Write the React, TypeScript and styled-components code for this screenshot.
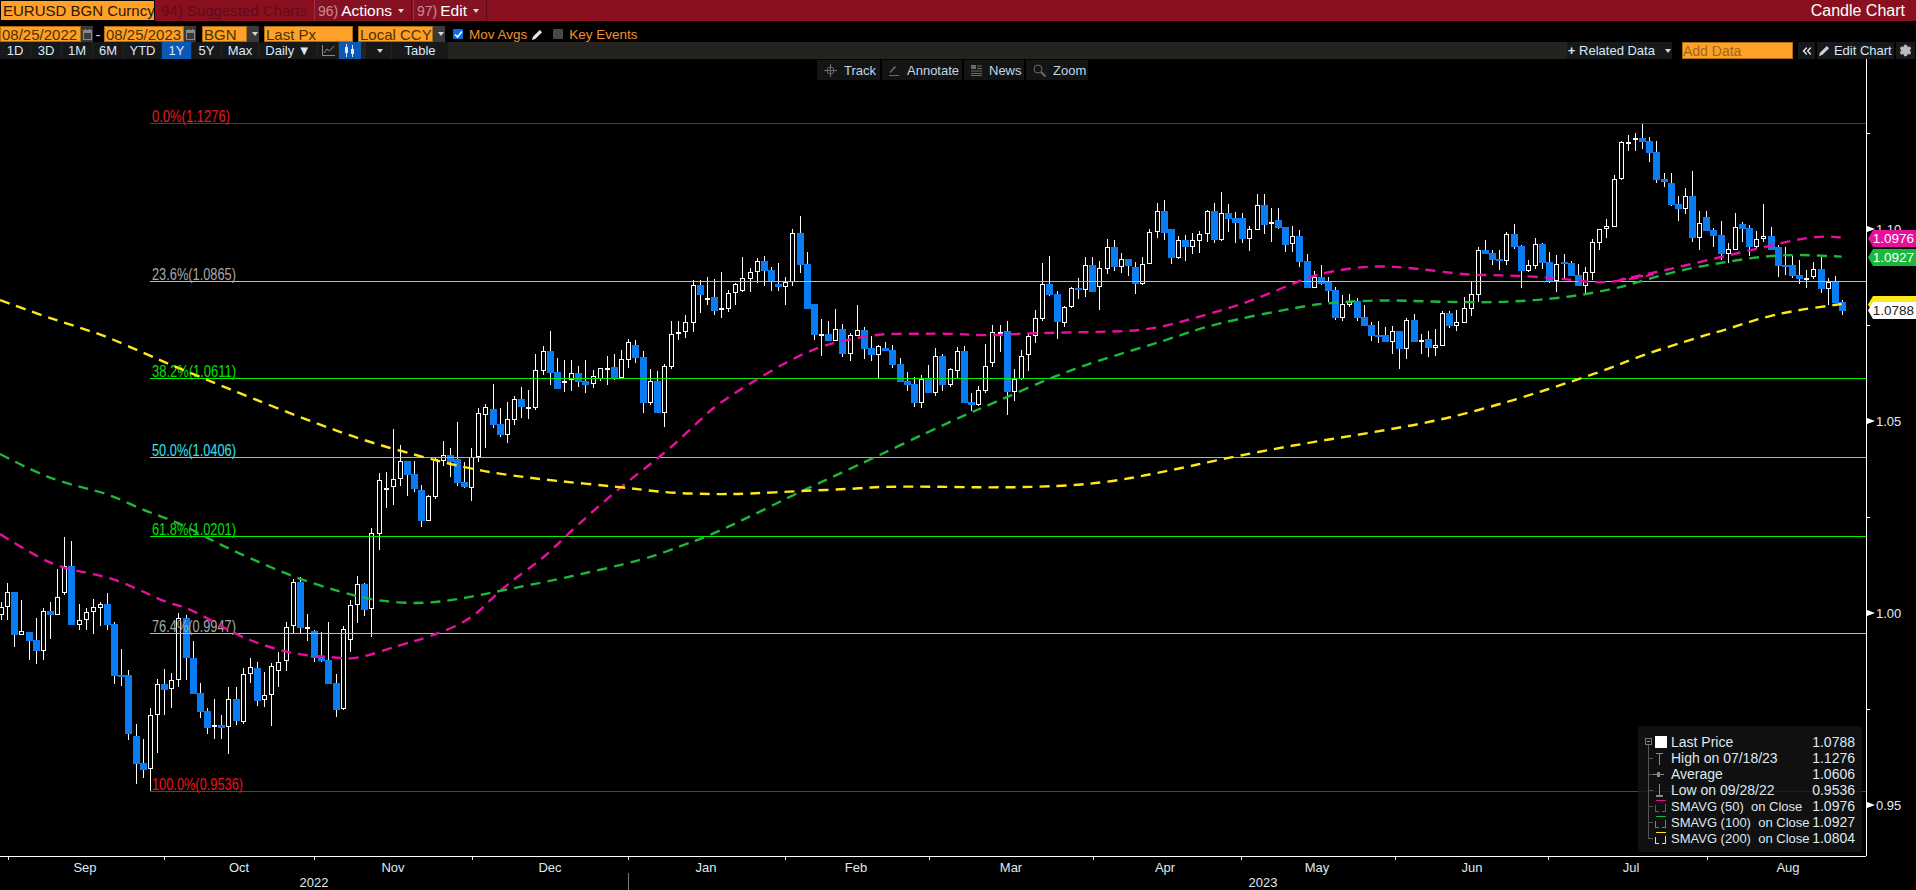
import styled, { createGlobalStyle } from 'styled-components';
import { ChevronsLeft, Settings } from 'lucide-react';

type Row = number[];
type Candle = { x: number; up: boolean; wt: number; bt: number; bb: number; wb: number };

// candles were read off in crops of the chart, so each block keeps its crop origin
const fromCrop = (ox: number, oy: number, rows: Row[]): Candle[] =>
	rows.map(([zx, up, wt, bt, bb, wb]) => ({
		x: Math.round(ox + zx / 3),
		up: up === 1,
		wt: Math.round(oy + wt / 3),
		bt: Math.round(oy + bt / 3),
		bb: Math.round(oy + bb / 3),
		wb: Math.round(oy + wb / 3),
	}));

const candles: Candle[] = [
	...fromCrop(0, 520, [
		[2, 1, 245, 262, 284, 300], [22, 1, 190, 216, 262, 300], [43, 0, 216, 216, 344, 380], [64, 1, 240, 334, 344, 344],
		[88, 0, 336, 336, 362, 420], [109, 0, 295, 360, 392, 433], [130, 1, 265, 274, 392, 420], [151, 0, 247, 273, 285, 357],
		[172, 1, 147, 232, 284, 285], [193, 1, 52, 139, 218, 225], [214, 0, 63, 138, 314, 315], [238, 1, 252, 301, 314, 330],
		[259, 1, 265, 277, 301, 330], [280, 1, 238, 262, 277, 342], [301, 1, 246, 253, 265, 318], [322, 0, 220, 252, 314, 330],
		[343, 0, 307, 312, 467, 491], [364, 0, 387, 465, 470, 497], [385, 0, 450, 465, 641, 660], [409, 0, 612, 648, 731, 791],
		[430, 0, 657, 729, 749, 773], [451, 1, 565, 586, 748, 812], [472, 1, 478, 493, 586, 698], [493, 0, 447, 492, 509, 584],
		[514, 1, 460, 481, 506, 563], [535, 1, 280, 295, 481, 500], [559, 0, 285, 294, 413, 480], [580, 0, 363, 414, 521, 522],
		[601, 0, 490, 520, 575, 595], [622, 0, 565, 573, 623, 643], [643, 1, 537, 616, 622, 656], [664, 0, 585, 616, 623, 658],
		[685, 1, 502, 538, 622, 701], [709, 0, 500, 537, 602, 614], [730, 1, 445, 463, 605, 611], [751, 1, 415, 442, 463, 490],
		[772, 0, 425, 444, 543, 558], [793, 1, 457, 526, 541, 561], [814, 1, 430, 439, 526, 617], [835, 1, 396, 425, 454, 500],
		[859, 1, 305, 320, 424, 452], [880, 1, 178, 187, 319, 340], [901, 0, 172, 186, 323, 340], [922, 1, 283, 320, 320, 362],
		[943, 0, 330, 334, 415, 425], [964, 0, 337, 408, 422, 425], [985, 0, 306, 420, 491, 491], [1009, 0, 462, 490, 569, 590],
		[1030, 1, 318, 328, 568, 571], [1051, 1, 240, 256, 361, 395], [1072, 1, 168, 193, 256, 310], [1093, 0, 190, 192, 269, 288],
		[1114, 1, 25, 40, 268, 350],
	]),
	...fromCrop(350, 260, [
		[86, 1, 640, 661, 821, 870], [109, 1, 636, 684, 684, 743], [130, 1, 507, 658, 682, 735], [151, 1, 556, 604, 658, 678],
		[172, 0, 603, 603, 645, 708], [193, 0, 603, 642, 687, 695], [214, 0, 675, 690, 783, 800], [235, 1, 705, 708, 782, 782],
		[256, 1, 595, 598, 710, 716], [280, 1, 543, 586, 602, 618], [301, 0, 564, 586, 606, 650], [322, 0, 487, 598, 669, 678],
		[343, 0, 606, 666, 681, 683], [364, 1, 564, 592, 683, 722], [385, 1, 445, 460, 592, 606], [406, 1, 432, 442, 464, 564],
		[430, 0, 372, 447, 495, 505], [451, 0, 444, 492, 525, 530], [472, 1, 426, 478, 524, 548], [493, 1, 408, 418, 479, 495],
		[514, 0, 381, 417, 441, 474], [535, 1, 390, 442, 442, 477], [556, 1, 282, 331, 443, 450], [580, 1, 258, 274, 332, 345],
		[601, 0, 213, 273, 339, 375], [622, 0, 294, 336, 387, 388], [643, 1, 300, 363, 363, 396], [664, 1, 300, 340, 361, 393],
		[685, 0, 318, 339, 366, 380], [706, 0, 300, 363, 375, 399], [730, 1, 330, 349, 373, 385], [751, 1, 325, 325, 356, 362],
		[772, 1, 288, 324, 324, 375], [793, 0, 282, 321, 355, 360], [814, 1, 270, 298, 355, 355], [835, 1, 238, 247, 299, 324],
		[856, 0, 240, 255, 294, 308], [880, 0, 273, 291, 429, 459], [901, 1, 328, 364, 428, 435], [922, 0, 333, 363, 459, 459],
		[943, 1, 313, 319, 458, 500], [964, 1, 183, 221, 320, 326], [985, 1, 183, 215, 220, 240], [1006, 1, 166, 187, 215, 233],
		[1030, 1, 60, 76, 188, 216], [1051, 0, 60, 75, 105, 158], [1072, 1, 52, 114, 114, 135], [1093, 0, 58, 111, 153, 165],
		[1114, 1, 36, 145, 151, 173], [1135, 1, 90, 100, 146, 156], [1156, 1, 68, 73, 100, 135], [1177, 1, -10, 55, 92, 95],
		[1201, 1, 25, 37, 56, 95], [1222, 1, -6, 4, 37, 70], [1243, 0, -12, 3, 33, 78], [1264, 0, 22, 30, 63, 92],
		[1285, 0, 8, 72, 81, 92], [1306, 1, 52, 67, 80, 135], [1327, 1, -92, -80, 67, 78],
	]),
	...fromCrop(800, 170, [
		[1, 0, 138, 188, 285, 310], [22, 0, 247, 282, 417, 418], [43, 0, 402, 402, 495, 510], [64, 1, 447, 493, 493, 558],
		[85, 0, 453, 492, 513, 514], [106, 1, 418, 478, 513, 513], [127, 0, 463, 478, 552, 561], [151, 1, 490, 496, 551, 573],
		[172, 1, 406, 481, 498, 498], [193, 0, 472, 480, 537, 567], [214, 0, 498, 534, 555, 573], [235, 1, 525, 529, 554, 625],
		[256, 0, 517, 534, 543, 543], [277, 0, 525, 540, 585, 595], [301, 0, 565, 582, 636, 636], [322, 0, 606, 633, 645, 663],
		[343, 0, 621, 642, 699, 711], [364, 1, 616, 628, 698, 714], [385, 0, 585, 628, 669, 669], [406, 1, 535, 559, 668, 678],
		[427, 0, 552, 558, 645, 663], [451, 1, 595, 598, 644, 651], [472, 1, 530, 544, 602, 628], [493, 0, 528, 543, 699, 699],
		[514, 0, 669, 696, 705, 723], [535, 1, 648, 661, 705, 708], [556, 1, 522, 589, 662, 668], [577, 1, 465, 487, 578, 591],
		[601, 1, 465, 486, 486, 546], [622, 0, 453, 483, 666, 735], [643, 1, 597, 628, 665, 692], [664, 1, 541, 559, 628, 630],
		[685, 1, 490, 499, 554, 603], [706, 1, 420, 445, 499, 519], [727, 1, 279, 343, 446, 453], [748, 0, 258, 342, 375, 378],
		[772, 0, 363, 372, 456, 507], [793, 1, 408, 412, 460, 471], [814, 1, 351, 355, 412, 414], [835, 0, 324, 354, 360, 387],
		[856, 1, 262, 286, 359, 381], [877, 0, 262, 285, 366, 366], [898, 1, 273, 295, 352, 420], [922, 1, 207, 232, 296, 312],
		[943, 0, 210, 231, 291, 303], [964, 1, 250, 268, 290, 309], [985, 0, 267, 267, 288, 318], [1006, 0, 276, 291, 342, 372],
		[1027, 1, 261, 281, 341, 345], [1048, 1, 178, 187, 281, 282], [1072, 1, 99, 124, 187, 204], [1093, 0, 90, 123, 189, 210],
		[1114, 0, 177, 177, 264, 282], [1135, 1, 198, 211, 263, 266], [1156, 0, 195, 210, 231, 273], [1177, 1, 189, 211, 231, 252],
		[1198, 1, 183, 193, 212, 249], [1222, 1, 120, 124, 191, 216], [1243, 0, 99, 123, 210, 219], [1264, 1, 66, 130, 210, 213],
		[1285, 0, 102, 129, 147, 186], [1306, 0, 126, 144, 159, 219], [1327, 0, 129, 144, 207, 219], [1348, 1, 168, 178, 207, 243],
		[1372, 1, 72, 106, 179, 180], [1393, 0, 72, 105, 165, 192], [1414, 1, 114, 157, 163, 216], [1435, 0, 114, 150, 174, 177],
		[1456, 0, 171, 171, 225, 246], [1477, 1, 168, 199, 223, 246], [1498, 0, 180, 198, 276, 291],
	]),
	...fromCrop(1300, 110, [
		[22, 0, 432, 453, 534, 534], [43, 1, 483, 502, 534, 534], [64, 0, 465, 501, 522, 525], [85, 0, 501, 516, 543, 576],
		[106, 0, 531, 540, 624, 630], [127, 1, 555, 583, 624, 633], [148, 1, 552, 576, 584, 591], [172, 0, 564, 573, 624, 633],
		[193, 0, 585, 621, 648, 648], [214, 0, 636, 645, 678, 693], [235, 0, 633, 675, 678, 699], [256, 0, 651, 675, 696, 696],
		[277, 1, 648, 664, 695, 732], [298, 0, 663, 663, 717, 777], [319, 1, 625, 631, 716, 747], [343, 0, 612, 630, 696, 696],
		[364, 1, 672, 690, 690, 732], [385, 0, 663, 687, 714, 741], [406, 1, 657, 706, 713, 738], [427, 1, 603, 610, 707, 708],
		[448, 0, 603, 609, 648, 654], [469, 1, 600, 637, 647, 663], [493, 1, 561, 595, 638, 618], [514, 1, 516, 553, 596, 618],
		[535, 1, 411, 421, 554, 577], [556, 0, 390, 420, 432, 432], [577, 0, 420, 429, 450, 465], [598, 0, 420, 447, 453, 480],
		[619, 1, 366, 373, 452, 465], [643, 0, 342, 372, 411, 417], [664, 0, 405, 408, 483, 534], [685, 1, 450, 466, 483, 486],
		[706, 1, 384, 403, 467, 477], [727, 0, 399, 402, 459, 477], [748, 0, 426, 456, 513, 519], [769, 1, 435, 463, 513, 546],
		[793, 0, 432, 456, 462, 504], [814, 0, 453, 459, 498, 498], [835, 0, 462, 495, 528, 528], [856, 1, 471, 487, 527, 549],
		[877, 1, 388, 397, 488, 510], [898, 1, 358, 358, 398, 420], [919, 1, 327, 349, 358, 384], [943, 1, 195, 208, 350, 352],
		[964, 1, 93, 97, 208, 210], [985, 1, 75, 96, 96, 123], [1006, 1, 69, 85, 91, 123], [1027, 0, 42, 84, 96, 117],
		[1048, 0, 81, 93, 129, 156], [1069, 0, 93, 126, 210, 219], [1093, 0, 189, 207, 216, 231], [1114, 0, 189, 219, 285, 288],
		[1135, 0, 258, 282, 297, 333], [1156, 1, 235, 259, 296, 312], [1177, 0, 183, 258, 384, 396], [1198, 1, 303, 340, 383, 420],
	]),
	...fromCrop(1600, 110, [
		[319, 0, 303, 321, 363, 363], [340, 0, 354, 360, 378, 411], [364, 0, 333, 375, 432, 450], [385, 1, 399, 418, 431, 459],
		[406, 1, 309, 352, 419, 420], [427, 0, 336, 342, 357, 396], [448, 0, 345, 354, 411, 438], [469, 1, 363, 388, 410, 420],
		[490, 1, 282, 379, 388, 396], [514, 0, 351, 378, 420, 420], [535, 0, 405, 411, 468, 501], [556, 0, 411, 465, 469, 495],
		[577, 0, 438, 465, 498, 504], [598, 0, 450, 495, 507, 522], [619, 1, 480, 505, 505, 534], [640, 1, 457, 478, 500, 507],
		[664, 0, 441, 477, 537, 549], [685, 1, 504, 517, 537, 585], [706, 0, 498, 516, 579, 579], [727, 0, 570, 576, 603, 615],
	]),
];

type Pt = [number, number];
const pts = (ox: number, oy: number, sx: number, list: number[]): Pt[] => {
	const out: Pt[] = [];
	for (let i = 0; i < list.length; i += 2) out.push([ox + list[i] / sx, oy + list[i + 1] / 3]);
	return out;
};

const smooth = (p: Pt[]) => {
	let d = `M${p[0][0]} ${p[0][1]}`;
	for (let i = 1; i < p.length - 1; i++) {
		const mx = (p[i][0] + p[i + 1][0]) / 2;
		const my = (p[i][1] + p[i + 1][1]) / 2;
		d += ` Q${p[i][0]} ${p[i][1]} ${mx} ${my}`;
	}
	const last = p[p.length - 1];
	return d + ` L${last[0]} ${last[1]}`;
};

const yellowLine = smooth([
	...pts(0, 280, 2.8, [0, 60, 100, 100, 200, 135, 300, 170, 400, 218, 480, 255, 580, 300, 700, 352, 860, 420, 1020, 482, 1180, 530, 1300, 562, 1400, 582]),
	...pts(350, 260, 3, [610, 662, 800, 680, 950, 698, 1090, 703, 1200, 701, 1350, 693, 1500, 687]),
	[892, 486], [1014, 488], [1100, 484], [1173, 470], [1222, 459], [1295, 445], [1369, 433], [1442, 420], [1515, 400], [1576, 380],
	...pts(1300, 110, 3, [930, 775, 1020, 738, 1200, 680]),
	...pts(1600, 110, 3, [390, 655, 480, 625, 580, 602, 725, 582]),
]);

const greenLine = smooth([
	...pts(0, 280, 2.8, [0, 522, 100, 578, 200, 615, 300, 640, 400, 690, 500, 728, 600, 785, 700, 835, 820, 890, 950, 935, 1050, 962, 1180, 972, 1300, 955, 1420, 928, 1568, 897]),
	...pts(350, 260, 3, [890, 897, 1000, 855, 1070, 830, 1200, 770, 1340, 700, 1500, 627]),
	...pts(800, 170, 3, [465, 748, 590, 695, 760, 620, 900, 570, 1100, 510, 1240, 462, 1500, 410]),
	...pts(1300, 110, 3, [100, 577, 250, 570, 400, 575, 600, 578, 800, 563, 950, 535]),
	...pts(1600, 110, 3, [100, 520, 240, 480, 400, 452, 500, 438, 600, 434, 725, 440]),
]);

const magentaLine = smooth([
	...pts(0, 520, 3, [0, 42, 100, 105, 190, 145, 330, 172, 420, 210, 500, 248, 570, 265, 700, 340, 800, 380, 900, 405, 1000, 412, 1070, 418, 1200, 375]),
	[429, 637], [471, 620], [503, 587],
	...pts(350, 260, 3, [580, 895, 650, 825, 800, 690, 950, 575, 1050, 480, 1100, 435, 1200, 370, 1320, 300, 1410, 260]),
	...pts(800, 170, 3, [120, 515, 230, 492, 350, 491, 460, 491, 560, 497, 700, 489, 900, 486, 1050, 480, 1200, 440, 1350, 395]),
	...pts(1300, 110, 3, [15, 505, 100, 482, 220, 467, 340, 474, 500, 495, 600, 495, 760, 503, 880, 518, 950, 515, 1100, 485]),
	...pts(1600, 110, 3, [15, 518, 200, 480, 400, 432, 500, 410, 600, 386, 680, 378, 725, 383]),
]);

const fibs = [
	{ y: 123.5, label: '0.0%(1.1276)', len: 78, line: '#c00c18', text: '#e01c24' },
	{ y: 281.5, label: '23.6%(1.0865)', len: 84, line: '#bcbcbc', text: '#a8a8a8' },
	{ y: 378.5, label: '38.2%(1.0611)', len: 84, line: '#00f000', text: '#00e000' },
	{ y: 457.5, label: '50.0%(1.0406)', len: 84, line: '#30e4f0', text: '#30e4f0' },
	{ y: 536.5, label: '61.8%(1.0201)', len: 84, line: '#00f000', text: '#00e000' },
	{ y: 633.5, label: '76.4%(0.9947)', len: 84, line: '#bcbcbc', text: '#a8a8a8' },
	{ y: 791.5, label: '100.0%(0.9536)', len: 91, line: '#d00c18', text: '#f0101c' },
];

const periods = ['1D', '3D', '1M', '6M', 'YTD', '1Y', '5Y', 'Max'];
const periodWidths = [30, 30, 30, 30, 37, 29, 29, 36];

const months: [string, number][] = [
	['Sep', 85], ['Oct', 239], ['Nov', 393], ['Dec', 550], ['Jan', 706], ['Feb', 856],
	['Mar', 1011], ['Apr', 1165], ['May', 1317], ['Jun', 1472], ['Jul', 1631], ['Aug', 1788],
];
const monthTicks = [8, 164, 314, 472, 628, 785, 929, 1093, 1241, 1395, 1548, 1707];
const majorTicks: [string, number][] = [['1.10', 229], ['1.05', 421], ['1.00', 613], ['0.95', 805]];
const minorTicks = [133, 325, 517, 709];

const legendRows = [
	{ kind: 'box', label: 'Last Price', value: '1.0788' },
	{ kind: 'high', label: 'High on 07/18/23', value: '1.1276' },
	{ kind: 'avg', label: 'Average', value: '1.0606' },
	{ kind: 'low', label: 'Low on 09/28/22', value: '0.9536' },
	{ kind: '#e6109c', label: 'SMAVG (50)  on Close', value: '1.0976' },
	{ kind: '#1cb83c', label: 'SMAVG (100)  on Close', value: '1.0927' },
	{ kind: '#ffe81a', label: 'SMAVG (200)  on Close', value: '1.0804' },
];

function CandleMark({ c }: { c: Candle }) {
	if (!c.up) {
		return (
			<g>
				<rect x={c.x} y={c.wt} width={1} height={c.wb - c.wt} fill='#fff' />
				<rect x={c.x - 3} y={c.bt} width={7} height={Math.max(c.bb - c.bt, 2)} fill='#0a7bf0' />
			</g>
		);
	}
	if (c.bb - c.bt < 2) {
		return (
			<g>
				<rect x={c.x} y={c.wt} width={1} height={c.wb - c.wt} fill='#fff' />
				<rect x={c.x - 2} y={c.bt} width={5} height={2} fill='#fff' />
			</g>
		);
	}
	return (
		<g>
			<rect x={c.x} y={c.wt} width={1} height={c.wb - c.wt} fill='#fff' />
			<rect x={c.x - 1.5} y={c.bt + 0.5} width={4} height={c.bb - c.bt - 1} fill='#000' stroke='#fff' strokeWidth={1} />
		</g>
	);
}

function LegendIcon({ kind }: { kind: string }) {
	const swatch = kind.startsWith('#');
	return (
		<LegendGlyph width='27' height='16' viewBox='0 0 27 16' shapeRendering='crispEdges'>
			{kind === 'box' ? (
				<>
					<rect x='1.5' y='4.5' width='6' height='6' fill='none' stroke='#777' />
					<rect x='3' y='7' width='3' height='1' fill='#999' />
					<rect x='4' y='11' width='1' height='5' fill='#555' />
					<rect x='11' y='2' width='12' height='12' fill='#fff' />
				</>
			) : (
				<>
					<rect x='4' y='0' width='1' height={kind === '#ffe81a' ? 8 : 16} fill='#555' />
					<rect x='4' y='8' width='5' height='1' fill='#555' />
				</>
			)}
			{kind === 'high' && (
				<>
					<rect x='12' y='3' width='7' height='1' fill='#888' />
					<rect x='15' y='3' width='1' height='12' fill='#888' />
				</>
			)}
			{kind === 'avg' && (
				<>
					<rect x='9' y='8' width='11' height='1' fill='#888' />
					<rect x='13' y='6' width='3' height='5' fill='#888' />
				</>
			)}
			{kind === 'low' && (
				<>
					<rect x='15' y='2' width='1' height='12' fill='#888' />
					<rect x='12' y='13' width='7' height='2' fill='#888' />
				</>
			)}
			{swatch && (
				<>
					<rect x='12' y='2' width='10' height='1' fill={kind} />
					<rect x='11' y='7' width='1' height='7' fill={kind} />
					<rect x='11' y='13' width='4' height='1' fill={kind} />
					<rect x='21' y='6' width='1' height='8' fill={kind} />
					<rect x='18' y='13' width='4' height='1' fill={kind} />
				</>
			)}
		</LegendGlyph>
	);
}

function CalendarIcon() {
	return (
		<svg width='9' height='11' viewBox='0 0 9 11'>
			<rect x='0.5' y='1.5' width='8' height='9' fill='none' stroke='#8a8a8a' />
			<rect x='0' y='1' width='9' height='3' fill='#8a8a8a' />
			<rect x='2' y='0' width='1' height='2' fill='#8a8a8a' />
			<rect x='6' y='0' width='1' height='2' fill='#8a8a8a' />
		</svg>
	);
}

function PencilIcon({ color = '#d0d0d0', size = 11 }: { color?: string; size?: number }) {
	return (
		<svg width={size} height={size} viewBox='0 0 12 12'>
			<path d='M0 12 L1 8.5 L8.5 1 L11 3.5 L3.5 11 Z' fill={color} />
		</svg>
	);
}

export default function App() {
	return (
		<>
			<GlobalStyle />
			<Screen>
				<TitleBar>
					<SecurityBox>EURUSD BGN Curncy</SecurityBox>
					<DimMenu>94) Suggested Charts</DimMenu>
					<MenuItem $w={98}>
						<MenuNum>96)</MenuNum> Actions <Caret />
					</MenuItem>
					<MenuItem $w={74}>
						<MenuNum>97)</MenuNum> Edit <Caret />
					</MenuItem>
					<ChartTitle>Candle Chart</ChartTitle>
				</TitleBar>

				<InputBar>
					<Input $w={81}>08/25/2022</Input>
					<IconCell $w={12}>
						<CalendarIcon />
					</IconCell>
					<Dash>-</Dash>
					<Input $w={80}>08/25/2023</Input>
					<IconCell $w={12}>
						<CalendarIcon />
					</IconCell>
					<Input $w={45} $ml={6}>BGN</Input>
					<IconCell $w={12}>
						<Caret />
					</IconCell>
					<Input $w={89} $ml={5}>Last Px</Input>
					<Input $w={75} $ml={5}>Local CCY</Input>
					<IconCell $w={12}>
						<Caret />
					</IconCell>
					<CheckBox $on>
						<svg width='9' height='9' viewBox='0 0 9 9'>
							<path d='M1 4.5 L3.5 7 L8 1.5' fill='none' stroke='#fff' strokeWidth='1.6' />
						</svg>
					</CheckBox>
					<OrangeLabel>Mov Avgs</OrangeLabel>
					<PencilBox>
						<PencilIcon color='#e8e8e8' />
					</PencilBox>
					<CheckBox />
					<OrangeLabel>Key Events</OrangeLabel>
				</InputBar>

				<ToolBar>
					<ToolGroup>
						{periods.map((p, i) => (
							<ToolButton key={p} $w={periodWidths[i]} $active={p === '1Y'}>
								{p}
							</ToolButton>
						))}
						<ToolButton $w={58}>Daily ▼</ToolButton>
						<ToolButton $w={20}>
							<svg width='13' height='11' viewBox='0 0 13 11' fill='none' stroke='#8c8c8c'>
								<path d='M0.5 0 V10.5 H13' />
								<path d='M2 8 L5 4 L7.5 6 L12 1' />
							</svg>
						</ToolButton>
						<ToolButton $w={22} $active>
							<svg width='10' height='13' viewBox='0 0 10 13' fill='#dce8f4'>
								<rect x='1' y='0' width='1' height='13' />
								<rect x='0' y='3' width='3' height='6' />
								<rect x='7' y='1' width='1' height='12' />
								<rect x='6' y='5' width='3' height='5' />
							</svg>
						</ToolButton>
						<ToolButton $w={25} $ml={4}>
							<Caret />
						</ToolButton>
						<ToolButton $w={56}>Table</ToolButton>
					</ToolGroup>
					<ToolRight>
						<ToolButton $w={105}>
							<strong>+</strong>&nbsp;Related Data&nbsp;&nbsp;<Caret />
						</ToolButton>
						<AddData>Add Data</AddData>
						<ToolButton $w={17}>
							<ChevronsLeft size={14} strokeWidth={2.5} />
						</ToolButton>
						<ToolButton $w={77}>
							<PencilIcon />
							&nbsp;Edit Chart
						</ToolButton>
						<ToolButton $w={19}>
							<Settings size={13} fill='#bbb' color='#bbb' />
						</ToolButton>
					</ToolRight>
				</ToolBar>

				<ChartGrid>
					<Plot>
						<ChartSvg viewBox='0 59 1866 797' width='1866' height='797'>
							<g shapeRendering='crispEdges'>
								{candles.map((c, i) => (
									<CandleMark key={i} c={c} />
								))}
								{fibs.map((f) => (
									<line key={f.label} x1='150' x2='1866' y1={f.y} y2={f.y} stroke={f.line} strokeWidth='1' />
								))}
							</g>
							{fibs.map((f) => (
								<FibLabel key={f.label} x='152' y={f.y - 2} fill={f.text} textLength={f.len} lengthAdjust='spacingAndGlyphs'>
									{f.label}
								</FibLabel>
							))}
							<path d={magentaLine} fill='none' stroke='#e6109c' strokeWidth='2.4' strokeDasharray='10 7' />
							<path d={greenLine} fill='none' stroke='#1cb83c' strokeWidth='2.4' strokeDasharray='10 7' />
							<path d={yellowLine} fill='none' stroke='#ffe81a' strokeWidth='2.4' strokeDasharray='10 7' />
						</ChartSvg>

						<ChartTools>
							<ChartTool $w={63}>
								<svg width='13' height='13' viewBox='0 0 13 13' fill='none' stroke='#6a6a6a'>
									<circle cx='6.5' cy='6.5' r='3.5' />
									<path d='M6.5 0 V13 M0 6.5 H13' />
								</svg>
								Track
							</ChartTool>
							<ChartTool $w={80}>
								<svg width='11' height='11' viewBox='0 0 11 11' fill='none' stroke='#6a6a6a'>
									<path d='M1 7.5 L6.5 1.5' strokeWidth='1.6' />
									<path d='M0 10.5 H10' />
								</svg>
								Annotate
							</ChartTool>
							<ChartTool $w={60}>
								<svg width='11' height='11' viewBox='0 0 11 11' stroke='#6a6a6a'>
									<rect x='0.5' y='0.5' width='4' height='3' fill='#6a6a6a' />
									<path d='M6 1 H11 M6 3.5 H11 M0 6 H11 M0 8.5 H11 M0 10.5 H11' />
								</svg>
								News
							</ChartTool>
							<ChartTool $w={62}>
								<svg width='13' height='13' viewBox='0 0 13 13' fill='none' stroke='#6a6a6a'>
									<circle cx='5' cy='5' r='4' />
									<path d='M8 8 L12.5 12.5' strokeWidth='2' />
								</svg>
								Zoom
							</ChartTool>
						</ChartTools>

						<Legend>
							{legendRows.map((r) => (
								<LegendRow key={r.label}>
									<LegendIcon kind={r.kind} />
									<LegendLabel $tight={r.kind.startsWith('#')}>{r.label}</LegendLabel>
									<span>{r.value}</span>
								</LegendRow>
							))}
						</Legend>
					</Plot>

					<PriceAxis>
						{minorTicks.map((y) => (
							<MinorTick key={y} $y={y - 59} />
						))}
						{majorTicks.map(([label, y]) => (
							<PriceLabel key={label} $y={y - 59}>
								<Pointer />
								{label}
							</PriceLabel>
						))}
						<PriceTag $y={237} $bg='#ffe81a' $fg='#000' />
						<PriceTag $y={171} $bg='#e6109c' $fg='#fff'>1.0976</PriceTag>
						<PriceTag $y={190} $bg='#1cb83c' $fg='#fff'>1.0927</PriceTag>
						<PriceTag $y={243} $bg='#fff' $fg='#222'>1.0788</PriceTag>
					</PriceAxis>

					<TimeAxis>
						{monthTicks.map((x) => (
							<TimeTick key={x} $x={x} />
						))}
						{months.map(([m, x]) => (
							<MonthLabel key={m} $x={x}>
								{m}
							</MonthLabel>
						))}
						<YearLabel $x={314}>2022</YearLabel>
						<YearRule $x={628} />
						<YearLabel $x={1263}>2023</YearLabel>
					</TimeAxis>
				</ChartGrid>
			</Screen>
		</>
	);
}

const GlobalStyle = createGlobalStyle`
	html, body {
		margin: 0;
		padding: 0;
		background: #000;
	}
	* {
		box-sizing: border-box;
	}
`;

const Screen = styled.div`
	display: flex;
	flex-direction: column;
	width: 1916px;
	height: 890px;
	overflow: hidden;
	background: #000;
	font-family: 'Liberation Sans', Arial, sans-serif;
	color: #dfe8f0;
`;

const TitleBar = styled.div`
	display: flex;
	align-items: stretch;
	height: 21px;
	background: #8a1020;
	font-size: 15px;
`;

const SecurityBox = styled.div`
	display: flex;
	align-items: center;
	width: 155px;
	padding-left: 2px;
	background: #ffa028;
	color: #2a1800;
	border: 1px solid #000;
	white-space: nowrap;
	overflow: hidden;
`;

const DimMenu = styled.div`
	display: flex;
	align-items: center;
	width: 158px;
	padding-left: 6px;
	color: #5f0c1a;
	white-space: nowrap;
`;

const MenuItem = styled.div<{ $w: number }>`
	display: flex;
	align-items: center;
	gap: 3px;
	width: ${(p) => p.$w}px;
	margin-left: 1px;
	padding-left: 3px;
	background: #851222;
	border-left: 1px solid #a03040;
	border-right: 1px solid #5c0a16;
	color: #fff;
	font-size: 15.5px;
	white-space: nowrap;
`;

const MenuNum = styled.span`
	color: #c58c98;
	font-size: 14px;
`;

const ChartTitle = styled.div`
	display: flex;
	align-items: center;
	margin-left: auto;
	padding-right: 11px;
	color: #fff;
	font-size: 16px;
`;

const Caret = styled.span`
	display: inline-block;
	width: 0;
	height: 0;
	margin-left: 3px;
	border-left: 3px solid transparent;
	border-right: 3px solid transparent;
	border-top: 4px solid #d8d8d8;
`;

const InputBar = styled.div`
	display: flex;
	align-items: center;
	height: 21px;
	padding-top: 5px;
	font-size: 15px;
`;

const Input = styled.div<{ $w: number; $ml?: number }>`
	display: flex;
	align-items: center;
	width: ${(p) => p.$w}px;
	height: 16px;
	margin-left: ${(p) => p.$ml ?? 0}px;
	padding-left: 1px;
	background: #ffa028;
	border: 1px solid #b06c12;
	color: #4e3200;
	white-space: nowrap;
	overflow: hidden;
`;

const IconCell = styled.div<{ $w: number }>`
	display: flex;
	align-items: center;
	justify-content: center;
	width: ${(p) => p.$w}px;
	height: 16px;
	background: #3a3a3a;
`;

const Dash = styled.span`
	width: 11px;
	padding-right: 1px;
	text-align: center;
	color: #d8d8d8;
`;

const CheckBox = styled.span<{ $on?: boolean }>`
	display: inline-flex;
	align-items: center;
	justify-content: center;
	width: 10px;
	height: 10px;
	margin-left: ${(p) => (p.$on ? 8 : 10)}px;
	background: ${(p) => (p.$on ? '#0a6ee0' : '#484848')};
	border-radius: 1px;
`;

const OrangeLabel = styled.span`
	margin-left: 6px;
	color: #f0922a;
	font-size: 13.5px;
	white-space: nowrap;
`;

const PencilBox = styled.span`
	display: inline-flex;
	margin-left: 5px;
`;

const ToolBar = styled.div`
	display: flex;
	height: 17px;
	font-size: 13px;
`;

const ToolGroup = styled.div`
	display: flex;
	flex: 1;
	gap: 1px;
	background: #24231f;
`;

const ToolRight = styled.div`
	display: flex;
	gap: 2px;
	width: 349px;
`;

const ToolButton = styled.div<{ $w: number; $active?: boolean; $ml?: number }>`
	display: flex;
	align-items: center;
	justify-content: center;
	width: ${(p) => p.$w}px;
	margin-left: ${(p) => p.$ml ?? 0}px;
	background: ${(p) => (p.$active ? '#0a58b8' : '#17181a')};
	color: #dce8f4;
	white-space: nowrap;
`;

const AddData = styled.div`
	display: flex;
	align-items: center;
	width: 111px;
	margin: 0 3px 0 8px;
	background: #ffa028;
	border: 1px solid #b06c12;
	color: #9c6a1c;
	font-size: 14px;
`;

const ChartGrid = styled.div`
	display: grid;
	grid-template-columns: 1866px 50px;
	grid-template-rows: 797px 34px;
`;

const Plot = styled.div`
	position: relative;
`;

const ChartSvg = styled.svg`
	display: block;
`;

const FibLabel = styled.text`
	font-family: 'Liberation Sans', Arial, sans-serif;
	font-size: 16px;
`;

const ChartTools = styled.div`
	position: absolute;
	top: 1px;
	left: 817px;
	display: flex;
	gap: 2px;
`;

const ChartTool = styled.div<{ $w: number }>`
	display: flex;
	align-items: center;
	gap: 7px;
	width: ${(p) => p.$w}px;
	height: 20px;
	padding-left: 7px;
	background: #141414;
	color: #c4d4e4;
	font-size: 13px;
`;

const Legend = styled.div`
	position: absolute;
	right: 4px;
	bottom: 4px;
	display: flex;
	flex-direction: column;
	width: 224px;
	height: 126px;
	padding: 8px 7px 0 6px;
	background: rgba(20, 20, 20, 0.82);
	border-radius: 3px;
	font-size: 14px;
`;

const LegendRow = styled.div`
	display: flex;
	align-items: center;
	height: 16px;
	white-space: pre;
`;

const LegendGlyph = styled.svg`
	flex-shrink: 0;
`;

const LegendLabel = styled.span<{ $tight?: boolean }>`
	flex: 1;
	font-size: ${(p) => (p.$tight ? 13 : 14)}px;
`;

const PriceAxis = styled.div`
	position: relative;
	border-left: 1px solid #fff;
	font-size: 13px;
`;

const MinorTick = styled.div<{ $y: number }>`
	position: absolute;
	top: ${(p) => p.$y}px;
	left: 0;
	width: 3px;
	height: 1px;
	background: #fff;
`;

const PriceLabel = styled.div<{ $y: number }>`
	position: absolute;
	top: ${(p) => p.$y - 8}px;
	left: 0;
	display: flex;
	align-items: center;
	height: 16px;
	color: #e4ecf4;
`;

const Pointer = styled.span`
	width: 0;
	height: 0;
	margin-right: 1px;
	border-top: 3px solid transparent;
	border-bottom: 3px solid transparent;
	border-left: 8px solid #fff;
`;

const PriceTag = styled.div<{ $y: number; $bg: string; $fg: string }>`
	position: absolute;
	top: ${(p) => p.$y}px;
	left: 1px;
	display: flex;
	align-items: center;
	justify-content: flex-end;
	width: 49px;
	height: 17px;
	padding-right: 3px;
	background: ${(p) => p.$bg};
	color: ${(p) => p.$fg};
	font-size: 13.5px;
	clip-path: polygon(5px 0, 100% 0, 100% 100%, 5px 100%, 0 50%);
`;

const TimeAxis = styled.div`
	position: relative;
	grid-column: 1;
	border-top: 1px solid #fff;
	font-size: 13px;
`;

const TimeTick = styled.div<{ $x: number }>`
	position: absolute;
	top: 0;
	left: ${(p) => p.$x}px;
	width: 1px;
	height: 3px;
	background: #fff;
`;

const MonthLabel = styled.div<{ $x: number }>`
	position: absolute;
	top: 3px;
	left: ${(p) => p.$x}px;
	transform: translateX(-50%);
	color: #dfe8f0;
`;

const YearLabel = styled.div<{ $x: number }>`
	position: absolute;
	top: 18px;
	left: ${(p) => p.$x}px;
	transform: translateX(-50%);
	color: #dfe8f0;
`;

const YearRule = styled.div<{ $x: number }>`
	position: absolute;
	top: 16px;
	bottom: 0;
	left: ${(p) => p.$x}px;
	width: 1px;
	background: #777;
`;
